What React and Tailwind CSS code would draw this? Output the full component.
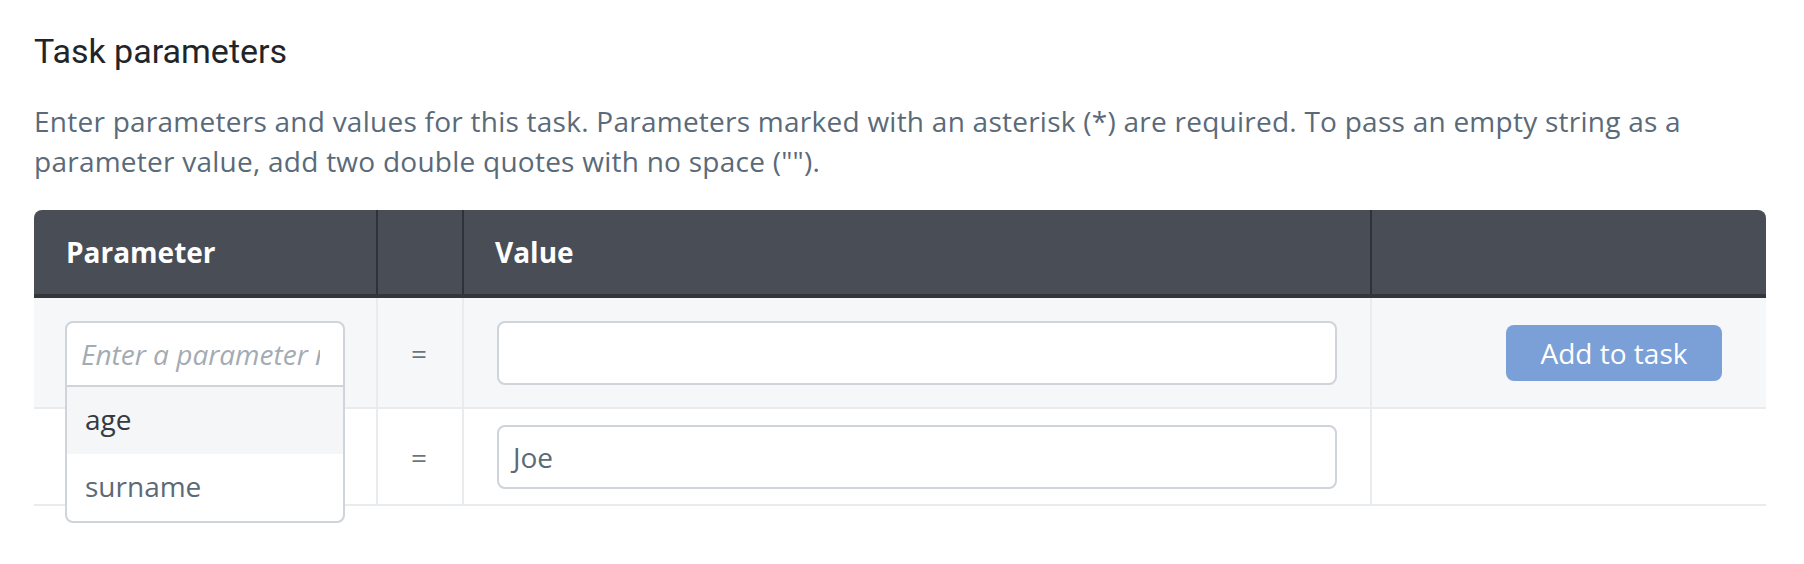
import React from "react";

const TaskParameters = () => {
  return (
    <div className="min-h-[564px] bg-white pl-[34px] pr-[38px] pt-[31px] font-['Open_Sans',sans-serif]">
      <h2 className="font-['Roboto',sans-serif] text-[34px] leading-[40px] text-[#212529]">
        Task parameters
      </h2>
      <p className="mt-[30px] w-[1732px] text-[28px] leading-[40px] tracking-[0.25px] text-[#5a6a79]">
        Enter parameters and values for this task. Parameters marked with an
        asterisk (*) are required. To pass an empty string as a parameter value,
        add two double quotes with no space ("").
      </p>

      <div className="mt-[29px] w-[1732px]">
        {/* header */}
        <div className="grid grid-cols-[344px_86px_908px_394px] rounded-t-[8px] border-b-4 border-[#33373c] bg-[#494d55] text-[28px] font-bold leading-[38px] text-white">
          <div className="border-r-2 border-[#2f3337] py-[23px] pl-[32px]">
            Parameter
          </div>
          <div className="border-r-2 border-[#2f3337]" />
          <div className="border-r-2 border-[#2f3337] py-[23px] pl-[31px]">
            Value
          </div>
          <div />
        </div>

        {/* new parameter row */}
        <div className="grid grid-cols-[344px_86px_908px_394px] border-b-2 border-[#e9ecef] bg-[#f6f7f9] text-[28px]">
          <div className="relative border-r-2 border-[#e9ecef] pl-[31px] pt-[23px] pb-[22px]">
            <div className="h-[64px] w-[280px]" />
            <div className="absolute left-[31px] top-[23px] z-10 w-[280px] rounded-[8px] border-2 border-[#ced4da] bg-white">
              <div className="flex h-[64px] items-center border-b-2 border-[#ced4da] pl-[14px] pr-[23px]">
                <span className="overflow-hidden whitespace-nowrap italic text-[#a3abb3]">
                  Enter a parameter name
                </span>
              </div>
              <div className="flex h-[67px] items-center bg-[#f5f6f8] pb-[4px] pl-[18px] text-[#343a40]">
                age
              </div>
              <div className="flex h-[67px] items-center rounded-b-[6px] pb-[4px] pl-[18px] text-[#5a6a79]">
                surname
              </div>
            </div>
          </div>
          <div className="flex items-center justify-center border-r-2 border-[#e9ecef] pr-[2px] text-[#6c757d]">
            =
          </div>
          <div className="border-r-2 border-[#e9ecef] px-[33px] pt-[23px] pb-[22px]">
            <div className="h-[64px] rounded-[8px] border-2 border-[#ced4da] bg-white" />
          </div>
          <div className="flex items-center justify-end pr-[44px]">
            <button className="h-[56px] w-[216px] rounded-[8px] bg-[#7b9fd7] text-[28px] text-white">
              Add to task
            </button>
          </div>
        </div>

        {/* existing parameter row */}
        <div className="grid grid-cols-[344px_86px_908px_394px] border-b-2 border-[#e9ecef] bg-white text-[28px]">
          <div className="border-r-2 border-[#e9ecef]" />
          <div className="flex items-center justify-center border-r-2 border-[#e9ecef] pr-[2px] text-[#6c757d]">
            =
          </div>
          <div className="border-r-2 border-[#e9ecef] px-[33px] pt-[16px] pb-[15px]">
            <div className="flex h-[64px] items-center rounded-[8px] border-2 border-[#ced4da] bg-white pl-[14px] text-[#5a6a79]">
              Joe
            </div>
          </div>
          <div />
        </div>
      </div>
    </div>
  );
};

export default TaskParameters;
